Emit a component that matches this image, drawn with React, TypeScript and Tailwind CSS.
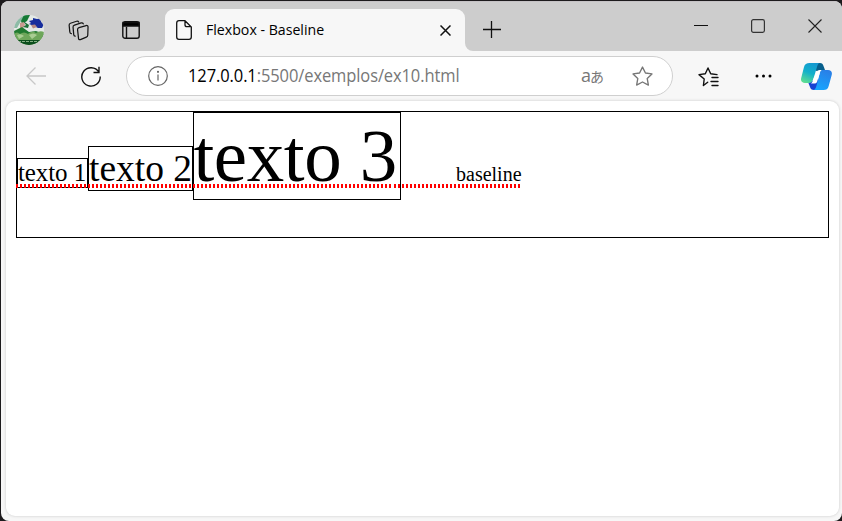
import React from "react";

function Avatar() {
  return (
    <svg width="30" height="30" viewBox="0 0 30 30">
      <defs><clipPath id="avatar"><circle cx="15" cy="15" r="15" /></clipPath></defs>
      <g clipPath="url(#avatar)">
        <rect width="30" height="30" fill="#e4e9e6" />
        <path d="M0 0h13l-2 5-4 1-4 7H0z" fill="#8dbba6" />
        <path d="M10 0h6l-3 6-5 3-1-3z" fill="#167a35" />
        <path d="M6 8l4-1 1 3-2 3-3 0z" fill="#c99a90" />
        <path d="M9 6l6 4-1 3-5-1 3-2z" fill="#1d6f38" />
        <path d="M15 6l4-1 0-2 4 1 5-1-1 4 3 2-2 4-4 0-4-2-5-2 2-1z" fill="#172d9c" />
        <path d="M17 10l4-.5 2 2.500-4 1.500z" fill="#b58983" />
        <path d="M0 16l8-4 7 5 7-1 8 3v6H0z" fill="#217a30" />
        <path d="M0 19q3-3 6 0 4-3 8 0 4-4 8-1 4-3 8-1v13H0z" fill="#6ea65a" />
        <path d="M3 20q4-2 7 1l-5 3M15 20q4-3 8 0l-5 4" fill="#a9cd92" />
        <path d="M0 25h30v5H0z" fill="#0b4e1d" />
        <path d="M4 26.500h22" stroke="#b9d7b0" strokeWidth=".7" strokeDasharray="3 1" />
      </g>
    </svg>
  );
}

function Copilot() {
  return (
    <svg width="31" height="27" viewBox="0 0 31 27" className="block">
      <defs>
        <linearGradient id="cpLeft" x1=".7" y1="0" x2=".3" y2="1">
          <stop stopColor="#1597d0" /><stop offset=".5" stopColor="#12b0cb" /><stop offset="1" stopColor="#5ddc93" />
        </linearGradient>
        <linearGradient id="cpRight" x1=".7" y1="0" x2=".3" y2="1">
          <stop stopColor="#2a7fe6" /><stop offset="1" stopColor="#16a5ff" />
        </linearGradient>
      </defs>
      <path d="M15 0h4c2 0 3 1 3.500 3l1.500 4h3l-8 3-5-3z" fill="#075f8c" />
      <path d="M7 19l10-3 1 11h-5c-2.500 0-3.500-1-4-3z" fill="#1741d3" />
      <path d="M8.500 0H19c-2 0-2.500 2-3.300 5L12.500 15.500c-.8 2.500-2 4.500-5 4.500H4c-3 0-4.700-2-3.800-5L3 4c.9-3 2.500-4 5.500-4z" fill="url(#cpLeft)" />
      <path d="M21 7h6c3 0 4.500 2 3.700 5l-3 11c-.8 3-2.500 4-5.200 4H12c2 0 2.800-2 3.400-4L18.800 10c.5-2 1.200-3 2.200-3z" fill="url(#cpRight)" />
      <path d="M15.500 9q1-2 3-2h2.200q-1.400 1-1.900 3L16 19q-.6 1.500-2.600 1.500H10q1.700-1.500 2.500-5z" fill="#fff" />
    </svg>
  );
}

const star = "M10 1l2.800 5.600 6.200.9-4.500 4.400 1.100 6.200L10 15.200l-5.600 2.900 1.100-6.200L1 7.500l6.200-.9z";

export default function App() {
  return (
    <div className="h-[521px] w-[842px] overflow-hidden bg-[#1d1b1d] pl-px pt-px font-['Open_Sans',sans-serif] text-black">
      <div className="flex h-[520px] w-[841px] flex-col overflow-hidden rounded-[8px] bg-[#f7f7f7]">
        <div className="h-px shrink-0 bg-[#c5c2c5]" />
        <header className="flex h-[49px] shrink-0 bg-[#cdcdcd]">
          <div className="flex w-[156px] shrink-0 pl-[13px] pt-[13px]">
            <Avatar />
            <svg className="ml-[24px] mt-[5px]" width="21" height="21" viewBox="0 0 22 21" fill="none" stroke="#161616" strokeWidth="1.300" strokeLinejoin="round" strokeLinecap="round">
              <path d="M11.500 7.500l7.500-2.200q2-.4 2 1.600l-.3 8.500q0 1.500-1.500 2L13 20q-2 .5-2-1.500l-1-9q0-1.500 1.500-2z" />
              <path d="M7.500 16.500q-1.300-.2-1.500-1.700L5.300 7q-.2-1.500 1.500-2.100l7-2.300q1.700-.3 2.200.9M3.500 13.800q-1.500-.3-1.600-1.800L1.200 5q-.1-1.500 1.400-2.100L9 .8q1.600-.4 2.200.8" />
            </svg>
            <svg className="ml-[33px] mt-[6px]" width="18" height="18" viewBox="0 0 18 18" fill="none" stroke="#111" strokeWidth="1.400">
              <rect x=".8" y=".8" width="16.400" height="16.400" rx="2.300" /><path d="M1 1.500h16V5H1z" fill="#000" /><path d="M4.500 6v11" />
            </svg>
          </div>
          <div className="flex w-[8px] items-end bg-[#f7f7f7]">
            <div className="h-full w-full rounded-br-[8px] bg-[#cdcdcd]" />
          </div>
          <div className="w-[300px] bg-[#cdcdcd] pt-[7px]">
            <div className="flex h-[42px] items-center rounded-t-[9px] bg-[#f7f7f7] pl-[11px] pr-[14px]">
              <svg width="16" height="20" viewBox="0 0 16 20" fill="none" stroke="#111" strokeWidth="1.300" strokeLinejoin="round"><path d="M9 .7H3Q.7.700.7 3v14q0 2.300 2.300 2.300h10q2.300 0 2.300-2.300V7L9 .7v4q0 2 2 2h4.300" /></svg>
              <span className="relative top-[-1px] ml-[14px] origin-left scale-x-[0.943] whitespace-nowrap text-[15px]">Flexbox - Baseline</span>
              <svg className="ml-auto" width="11" height="11" viewBox="0 0 11 11" stroke="#111" strokeWidth="1.500"><path d="M.5.500l10 10m0-10l-10 10" /></svg>
            </div>
          </div>
          <div className="w-[8px] bg-[#f7f7f7]"><div className="h-full rounded-bl-[8px] bg-[#cdcdcd]" /></div>
          <svg className="ml-[10px] mt-[18px]" width="18" height="18" viewBox="0 0 18 18" stroke="#111" strokeWidth="1.300"><path d="M0 9.500h18M8.500 1v17" /></svg>
          <div className="ml-auto flex gap-[43px] pr-[20.500px] pt-[17px]">
            <svg width="14" height="14" viewBox="0 0 14 14" stroke="#111"><path d="M0 6.500h14" /></svg>
            <svg width="14" height="14" viewBox="0 0 14 14" fill="none" stroke="#333" strokeWidth="1.200"><rect x=".6" y=".6" width="12.800" height="12.800" rx="1.800" /></svg>
            <svg width="14" height="14" viewBox="0 0 14 14" stroke="#222" strokeWidth="1.100"><path d="M.5.500l13 13m0-13l-13 13" /></svg>
          </div>
        </header>
        <nav className="flex h-[50px] shrink-0 items-center pl-[25px] pr-[10px]">
          <svg width="20" height="18" viewBox="0 0 20 18" fill="none" stroke="#c8c8c8" strokeWidth="1.300"><path d="M9.500.500L1 9l8.500 8.500M1 9h19" /></svg>
          <svg className="ml-[35px]" width="20" height="21" viewBox="0 0 20 21" fill="none" stroke="#111" strokeWidth="1.400"><path d="M17.800 6A9.200 9.200 0 1 0 19.200 10.500M18 .8v5.700h-5.500" /></svg>
          <div className="ml-[25px] flex h-[40px] w-[547px] items-center rounded-full border border-[#cfcfcf] bg-white pl-[21px] pr-[19px]">
            <svg width="20" height="20" viewBox="0 0 20 20" fill="none" stroke="#666" strokeWidth="1.200"><circle cx="10" cy="10" r="9.300" /><path d="M10 8.500v6" /><circle cx="10" cy="5.800" r=".5" fill="#666" /></svg>
            <span className="mb-[2px] ml-[20px] w-[280px] origin-left scale-x-[0.942] whitespace-nowrap text-[17.500px] tracking-[-0.1px] text-[#777]"><span className="text-black">127.0.0.1</span>:5500/exemplos/ex10.html</span>
            <span className="mb-[2px] ml-auto flex items-baseline leading-none text-[#777]"><span className="w-[9px] text-[18px]">a</span><span className="font-['Noto_Sans_CJK_JP',sans-serif] text-[14px]">あ</span></span>
            <svg className="ml-[28px]" width="21" height="20" viewBox="0 0 20 19" fill="none" stroke="#777" strokeWidth="1.300" strokeLinejoin="round"><path d={star} /></svg>
          </div>
          <svg className="ml-[25px] mt-[2px]" width="21" height="20" viewBox="0 0 21 20" fill="none" stroke="#111" strokeWidth="1.400" strokeLinejoin="round" strokeLinecap="round"><path d="M9.700 15.200l-4.300 3.300.8-6.500L1 7.600l6.300-.9L10 1l2.700 5.700 6.300.9M14 10.500h6M13 14.500h7M14 18.500h6" /></svg>
          <svg className="ml-[36px]" width="17" height="4" viewBox="0 0 17 4"><circle cx="2" cy="2" r="1.500" /><circle cx="8.500" cy="2" r="1.500" /><circle cx="15" cy="2" r="1.500" /></svg>
          <div className="ml-auto"><Copilot /></div>
        </nav>
        <main className="ml-[5px] h-[415px] w-[833px] shrink-0 rounded-[9px] bg-white px-[10px] pt-[10px] font-['Liberation_Serif',serif] shadow-[0_0_3px_#c6c6c6]">
          <section className="relative flex h-[127px] w-[813px] items-baseline border border-black">
            <div className="h-[30px] w-[71px] whitespace-nowrap border border-black text-[25px] leading-[28px] tracking-[-0.1px]">texto 1</div>
            <div className="h-[45px] w-[105px] whitespace-nowrap border border-black text-[37.5px] leading-[43px]">texto 2</div>
            <div className="h-[88px] w-[208px] whitespace-nowrap border border-black indent-[-0.6px] text-[75px] leading-[86px] tracking-[-0.4px]">texto 3</div>
            <span className="ml-[55px] text-[20px] leading-[23px]">baseline</span>
            <div className="absolute left-[-1px] top-[72px] h-[4px] w-[504px] bg-[repeating-linear-gradient(90deg,red_0px,red_2px,transparent_2px,transparent_4.016px)]" />
          </section>
        </main>
      </div>
    </div>
  );
}
